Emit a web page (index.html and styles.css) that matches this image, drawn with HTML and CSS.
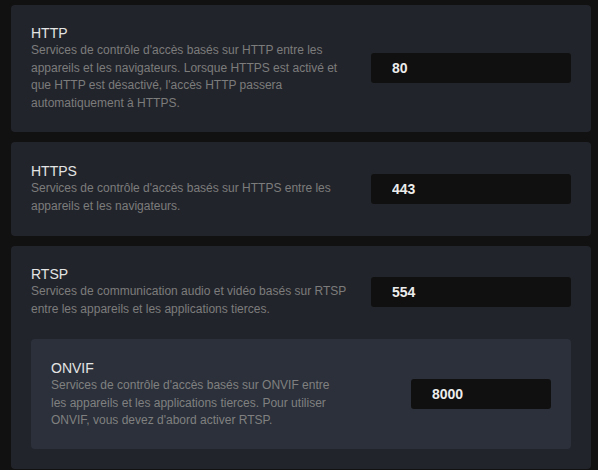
FILE: index.html
```
<!DOCTYPE html>
<html lang="fr">
<head>
<meta charset="utf-8">
<title>Ports</title>
<link rel="stylesheet" href="styles.css">
</head>
<body>
<div class="page">
	<div class="card">
		<div class="row">
			<div class="info">
				<div class="title">HTTP</div>
				<div class="desc">Services de contrôle d'accès basés sur HTTP entre les appareils et les navigateurs. Lorsque HTTPS est activé et que HTTP est désactivé, l'accès HTTP passera automatiquement à HTTPS.</div>
			</div>
			<input class="port" type="text" value="80">
		</div>
	</div>

	<div class="card short">
		<div class="row">
			<div class="info">
				<div class="title">HTTPS</div>
				<div class="desc">Services de contrôle d'accès basés sur HTTPS entre les appareils et les navigateurs.</div>
			</div>
			<input class="port" type="text" value="443">
		</div>
	</div>

	<div class="card">
		<div class="row">
			<div class="info">
				<div class="title">RTSP</div>
				<div class="desc">Services de communication audio et vidéo basés sur RTSP entre les appareils et les applications tierces.</div>
			</div>
			<input class="port" type="text" value="554">
		</div>
		<div class="sub">
			<div class="row">
				<div class="info">
					<div class="title">ONVIF</div>
					<div class="desc">Services de contrôle d'accès basés sur ONVIF entre les appareils et les applications tierces. Pour utiliser ONVIF, vous devez d'abord activer RTSP.</div>
				</div>
				<input class="port" type="text" value="8000">
			</div>
		</div>
	</div>
</div>
</body>
</html>
```

FILE: styles.css
```
*
{
	box-sizing: border-box;
}
body
{
	margin: 0;
	background: #111111;
	font-family: "Liberation Sans", Arial, sans-serif;
}
.page{
	display: flex;
	flex-direction: column;
	gap: 10px;
	padding: 5px 7px 5px 11px;
}
.card{
	background: #22242b;
	border-radius: 4px;
	padding: 19px 20px 20px 20px;
}
.card.short{
	padding: 20px 20px 21px 20px;
}
.row{
	display: flex;
	justify-content: space-between;
	align-items: center;
}
.info{
	width: 320px;
}
.title{
	font-size: 14px;
	line-height: 18px;
	color: #e4e4e4;
}
.desc{
	font-size: 12px;
	line-height: 17.5px;
	color: #7c7c7c;
}
.port{
	width: 200px;
	height: 30px;
	border: none;
	border-radius: 3px;
	background: #101010;
	color: #ececec;
	font-family: "Liberation Sans", Arial, sans-serif;
	font-size: 14px;
	font-weight: bold;
	padding: 0 21px;
	outline: none;
}
.sub{
	margin-top: 21px;
	background: #2b303a;
	border-radius: 4px;
	padding: 20px 20px 19px 20px;
}
.sub .info{
	width: 290px;
}
.sub .port{
	width: 140px;
}
.sub .desc{
	color: #808080;
}
```
